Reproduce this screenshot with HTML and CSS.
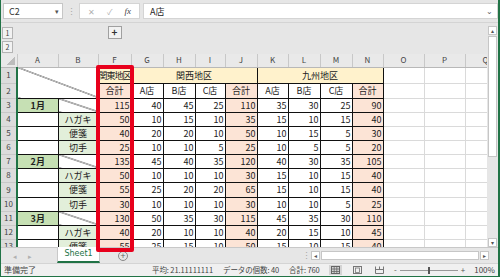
FILE: index.html
```html
<!DOCTYPE html>
<html lang="ja">
<head>
    <meta charset="UTF-8">
    <title>Excel - Sheet1</title>
    <link rel="stylesheet" href="styles.css">
</head>
<body>
<div class="window">
    <div class="formula-bar">
        <div class="namebox"><span>C2</span><span class="caret">▾</span></div>
        <div class="dots">⋮</div>
        <div class="fx-box">
            <span class="fx-btn">✕</span>
            <span class="fx-btn">✓</span>
            <span class="fx-btn fx">fx</span>
        </div>
        <div class="formula"><span>A店</span><span class="chev">⌄</span></div>
    </div>

    <div class="main">
        <div class="work">
            <div class="outline">
                <div class="levels">
                    <span class="lvl">1</span>
                    <span class="lvl">2</span>
                </div>
                <div class="outline-gap"></div>
                <div class="outline-f"><span class="expand">+</span></div>
            </div>
            <div class="sheet">
                <table class="grid">
                    <colgroup>
                        <col class="w-hd"><col class="w-a"><col class="w-b"><col class="w-f"><col class="w-g">
                        <col class="w-h"><col class="w-i"><col class="w-j"><col class="w-k"><col class="w-l">
                        <col class="w-m"><col class="w-n"><col class="w-o"><col class="w-p"><col class="w-q">
                    </colgroup>
                    <thead>
                        <tr>
                            <th class="corner"></th>
                            <th>A</th><th>B</th><th>F</th><th>G</th><th>H</th><th>I</th><th>J</th>
                            <th>K</th><th>L</th><th>M</th><th>N</th><th>O</th><th>P</th><th>Q</th>
                        </tr>
                    </thead>
                    <tbody>
                        <tr class="h16">
                            <th>1</th>
                            <td class="b diag" colspan="2" rowspan="2"></td>
                            <td class="b yel tight">関東地区</td>
                            <td class="b yel ctr" colspan="4">関西地区</td>
                            <td class="b yel ctr" colspan="4">九州地区</td>
                            <td></td><td></td><td></td>
                        </tr>
                        <tr class="h15">
                            <th>2</th>
                            <td class="b pch ctr">合計</td>
                            <td class="b ctr">A店</td><td class="b ctr">B店</td><td class="b ctr">C店</td><td class="b pch ctr">合計</td>
                            <td class="b ctr">A店</td><td class="b ctr">B店</td><td class="b ctr">C店</td><td class="b pch ctr">合計</td>
                            <td></td><td></td><td></td>
                        </tr>
                        <tr class="h14">
                            <th>3</th>
                            <td class="b grn ctr month">1月</td><td class="b diag"></td>
                            <td class="b pch num">115</td>
                            <td class="b num">40</td><td class="b num">45</td><td class="b num">25</td><td class="b pch num">110</td>
                            <td class="b num">35</td><td class="b num">30</td><td class="b num">25</td><td class="b pch num">90</td>
                            <td></td><td></td><td></td>
                        </tr>
                        <tr class="h14">
                            <th>4</th>
                            <td class="b"></td><td class="b lgr ctr">ハガキ</td>
                            <td class="b pch num">50</td>
                            <td class="b num">10</td><td class="b num">15</td><td class="b num">10</td><td class="b pch num">35</td>
                            <td class="b num">15</td><td class="b num">10</td><td class="b num">15</td><td class="b pch num">40</td>
                            <td></td><td></td><td></td>
                        </tr>
                        <tr class="h14">
                            <th>5</th>
                            <td class="b"></td><td class="b lgr ctr">便箋</td>
                            <td class="b pch num">40</td>
                            <td class="b num">20</td><td class="b num">20</td><td class="b num">10</td><td class="b pch num">50</td>
                            <td class="b num">10</td><td class="b num">15</td><td class="b num">5</td><td class="b pch num">30</td>
                            <td></td><td></td><td></td>
                        </tr>
                        <tr class="h14">
                            <th>6</th>
                            <td class="b"></td><td class="b lgr ctr">切手</td>
                            <td class="b pch num">25</td>
                            <td class="b num">10</td><td class="b num">10</td><td class="b num">5</td><td class="b pch num">25</td>
                            <td class="b num">10</td><td class="b num">5</td><td class="b num">5</td><td class="b pch num">20</td>
                            <td></td><td></td><td></td>
                        </tr>
                        <tr class="h14">
                            <th>7</th>
                            <td class="b grn ctr month">2月</td><td class="b diag"></td>
                            <td class="b pch num">135</td>
                            <td class="b num">45</td><td class="b num">40</td><td class="b num">35</td><td class="b pch num">120</td>
                            <td class="b num">40</td><td class="b num">30</td><td class="b num">35</td><td class="b pch num">105</td>
                            <td></td><td></td><td></td>
                        </tr>
                        <tr class="h14">
                            <th>8</th>
                            <td class="b"></td><td class="b lgr ctr">ハガキ</td>
                            <td class="b pch num">50</td>
                            <td class="b num">10</td><td class="b num">10</td><td class="b num">10</td><td class="b pch num">30</td>
                            <td class="b num">15</td><td class="b num">10</td><td class="b num">15</td><td class="b pch num">40</td>
                            <td></td><td></td><td></td>
                        </tr>
                        <tr class="h15">
                            <th>9</th>
                            <td class="b"></td><td class="b lgr ctr">便箋</td>
                            <td class="b pch num">55</td>
                            <td class="b num">25</td><td class="b num">20</td><td class="b num">20</td><td class="b pch num">65</td>
                            <td class="b num">15</td><td class="b num">10</td><td class="b num">15</td><td class="b pch num">40</td>
                            <td></td><td></td><td></td>
                        </tr>
                        <tr class="h14">
                            <th>10</th>
                            <td class="b"></td><td class="b lgr ctr">切手</td>
                            <td class="b pch num">30</td>
                            <td class="b num">10</td><td class="b num">10</td><td class="b num">10</td><td class="b pch num">30</td>
                            <td class="b num">10</td><td class="b num">10</td><td class="b num">5</td><td class="b pch num">25</td>
                            <td></td><td></td><td></td>
                        </tr>
                        <tr class="h14">
                            <th>11</th>
                            <td class="b grn ctr month">3月</td><td class="b diag"></td>
                            <td class="b pch num">130</td>
                            <td class="b num">50</td><td class="b num">35</td><td class="b num">30</td><td class="b pch num">115</td>
                            <td class="b num">45</td><td class="b num">35</td><td class="b num">30</td><td class="b pch num">110</td>
                            <td></td><td></td><td></td>
                        </tr>
                        <tr class="h14">
                            <th>12</th>
                            <td class="b"></td><td class="b lgr ctr">ハガキ</td>
                            <td class="b pch num">40</td>
                            <td class="b num">20</td><td class="b num">10</td><td class="b num">10</td><td class="b pch num">40</td>
                            <td class="b num">20</td><td class="b num">15</td><td class="b num">10</td><td class="b pch num">45</td>
                            <td></td><td></td><td></td>
                        </tr>
                        <tr class="h14">
                            <th>13</th>
                            <td class="b"></td><td class="b lgr ctr">便箋</td>
                            <td class="b pch num">55</td>
                            <td class="b num">25</td><td class="b num">15</td><td class="b num">10</td><td class="b pch num">50</td>
                            <td class="b num">15</td><td class="b num">10</td><td class="b num">15</td><td class="b pch num">40</td>
                            <td></td><td></td><td></td>
                        </tr>
                    </tbody>
                </table>
            </div>
        </div>
        <div class="vscroll">
            <span class="arrow">▴</span>
            <div class="vtrack"><div class="vthumb"></div></div>
            <span class="arrow">▾</span>
        </div>
    </div>

    <div class="tabbar">
        <div class="tab-nav"><span>◂</span><span>▸</span></div>
        <div class="tab">Sheet1</div>
        <div class="add-sheet">+</div>
        <div class="tab-space"></div>
        <div class="dots">⋮</div>
        <div class="hscroll">
            <span class="arrow">◂</span>
            <div class="htrack"></div>
            <span class="arrow">▸</span>
        </div>
    </div>

    <div class="statusbar">
        <span class="ready">準備完了</span>
        <div class="stats">
            <span>平均: 21.11111111</span>
            <span>データの個数: 40</span>
            <span>合計: 760</span>
        </div>
        <div class="views">
            <span class="view on">
                <svg width="9" height="8" viewBox="0 0 9 8"><rect x="0.5" y="0.5" width="8" height="7" fill="none" stroke="#666"/><path d="M0.5 3H8.5M0.5 5.5H8.5M3.2 0.5V7.5M5.8 0.5V7.5" stroke="#666" stroke-width="0.8"/></svg>
            </span>
            <span class="view">
                <svg width="9" height="8" viewBox="0 0 9 8"><rect x="0.5" y="0.5" width="8" height="7" fill="none" stroke="#777"/><rect x="2.5" y="2" width="4" height="4.5" fill="none" stroke="#777" stroke-width="0.8"/></svg>
            </span>
            <span class="view">
                <svg width="9" height="8" viewBox="0 0 9 8"><path d="M0.5 0.5V7.5H8.5V0.5M0.5 3.5H8.5M4.5 0.5V3.5" fill="none" stroke="#777"/></svg>
            </span>
        </div>
        <div class="zoom">
            <span>-</span>
            <div class="slider"><span class="knob"></span></div>
            <span>+</span>
        </div>
        <span class="pct">100%</span>
    </div>

    <div class="marker"></div>
</div>
</body>
</html>
```

FILE: styles.css
```css
* {
    margin: 0;
    padding: 0;
    box-sizing: border-box;
}
body {
    width: 500px;
    height: 277px;
    overflow: hidden;
    font-family: "Noto Sans CJK JP", "Noto Sans", sans-serif;
    font-size: 9px;
    color: #222;
    background: #fff;
}
.window {
    position: relative;
    width: 500px;
    height: 277px;
    display: flex;
    flex-direction: column;
    background: #e6e6e6;
    border-left: 1px solid #217346;
    border-right: 2px solid #217346;
    border-bottom: 1px solid #217346;
}

/* formula bar */
.formula-bar {
    height: 23px;
    display: flex;
    align-items: center;
    padding-left: 2px;
    border-bottom: 1px solid #d4d4d4;
}
.namebox {
    width: 60px;
    height: 16px;
    background: #fff;
    border: 1px solid #c6c6c6;
    display: flex;
    align-items: center;
    justify-content: space-between;
    padding: 0 3px 0 5px;
    color: #333;
    line-height: 1;
}
.caret {
    font-size: 7px;
    color: #555;
}
.dots {
    width: 16px;
    text-align: center;
    color: #a6a6a6;
    font-size: 9px;
}
.fx-box {
    width: 61px;
    height: 16px;
    background: #fff;
    border: 1px solid #d4d4d4;
    display: flex;
    align-items: center;
    justify-content: space-around;
    padding: 0 2px;
}
.fx-btn {
    color: #b0b0b0;
    font-size: 8px;
}
.fx {
    color: #444;
    font-style: italic;
    font-family: "Liberation Serif", serif;
    font-size: 9px;
}
.formula {
    flex: 1;
    height: 16px;
    margin-left: 3px;
    background: #fff;
    border: 1px solid #d4d4d4;
    display: flex;
    align-items: center;
    justify-content: space-between;
    padding: 0 4px 0 6px;
    line-height: 1;
}
.chev {
    color: #666;
    font-size: 8px;
}

/* sheet area */
.main {
    flex: 1;
    display: flex;
    min-height: 0;
}
.work {
    width: 486px;
    display: flex;
    flex-direction: column;
    overflow: hidden;
}
.outline {
    height: 31px;
    display: flex;
}
.levels {
    width: 16px;
    display: flex;
    flex-direction: column;
    gap: 2px;
    padding: 4px 0 0 1px;
}
.lvl {
    width: 11px;
    height: 12px;
    background: #f2f2f2;
    border: 1px solid #b4b4b4;
    font-size: 7px;
    line-height: 10px;
    text-align: center;
    color: #444;
}
.outline-gap {
    width: 81px;
}
.outline-f {
    width: 33px;
    display: flex;
    justify-content: center;
    padding-top: 3px;
}
.expand {
    width: 14px;
    height: 13px;
    background: #f2f2f2;
    border: 1px solid #a0a0a0;
    text-align: center;
    line-height: 10px;
    font-weight: bold;
    font-size: 10px;
    color: #333;
}
.sheet {
    flex: 1;
    overflow: hidden;
    background: #fff;
}
.grid {
    width: 505px;
    table-layout: fixed;
    border-collapse: collapse;
    line-height: 1;
}
.w-hd { width: 16px; }
.w-a { width: 41px; }
.w-b { width: 40px; }
.w-f { width: 33px; }
.w-g, .w-h, .w-j, .w-l, .w-m { width: 32px; }
.w-i { width: 30px; }
.w-k, .w-n { width: 31px; }
.w-o, .w-p, .w-q { width: 41px; }

thead th {
    height: 13px;
    background: #e9e9e9;
    border-right: 1px solid #c8c8c8;
    border-bottom: 1px solid #b8b8b8;
    font-weight: normal;
    font-size: 8px;
    color: #444;
    text-align: center;
}
thead th.corner {
    background: linear-gradient(135deg, #e9e9e9 55%, #bcbcbc 55%);
    background-size: 9px 9px;
    background-repeat: no-repeat;
    background-position: right 2px bottom 2px;
    background-color: #e9e9e9;
}
tbody th {
    background: #dcdcdc;
    border-right: 2px solid #217346;
    border-bottom: 1px solid #c8c8c8;
    font-weight: normal;
    font-size: 8px;
    color: #444;
    text-align: center;
}
tbody td {
    border: 1px solid #dadada;
    padding: 0 1px;
    white-space: nowrap;
    overflow: hidden;
}
.h16 { height: 16px; }
.h15 { height: 15px; }
.h14 { height: 14px; }

td.b { border: 1px solid #111; }
.yel { background: #fff2cc; }
.pch { background: #fce4d6; }
.grn { background: #c6e0b4; }
.lgr { background: #e2efda; }
.ctr { text-align: center; }
.num { text-align: right; }
.tight {
    padding: 0;
    letter-spacing: -1px;
}
.month { font-weight: bold; }
.diag {
    background: linear-gradient(to top right, transparent calc(50% - 0.7px), #333 50%, transparent calc(50% + 0.7px));
}

/* vertical scrollbar */
.vscroll {
    width: 11px;
    display: flex;
    flex-direction: column;
    align-items: center;
    padding: 3px 0 0;
}
.vscroll .arrow {
    width: 9px;
    height: 9px;
    background: #fff;
    border: 1px solid #c6c6c6;
    font-size: 6px;
    line-height: 7px;
    text-align: center;
    color: #555;
}
.vtrack {
    flex: 1;
    width: 9px;
    padding: 1px 0;
}
.vthumb {
    width: 9px;
    height: 121px;
    background: #fff;
    border: 1px solid #c6c6c6;
}

/* sheet tabs */
.tabbar {
    height: 16px;
    display: flex;
    align-items: stretch;
    border-top: 1px solid #c8c8c8;
}
.tab-nav {
    width: 56px;
    display: flex;
    gap: 11px;
    padding-left: 12px;
    align-items: center;
    color: #b0b0b0;
    font-size: 7px;
}
.tab {
    width: 43px;
    background: #fff;
    border-left: 1px solid #c8c8c8;
    border-right: 1px solid #c8c8c8;
    border-bottom: 2px solid #217346;
    color: #217346;
    font-family: "DejaVu Sans", sans-serif;
    font-size: 8px;
    text-align: center;
    line-height: 13px;
    margin-top: -1px;
}
.add-sheet {
    width: 10px;
    height: 10px;
    margin: 3px 0 0 18px;
    border: 1px solid #888;
    border-radius: 50%;
    font-size: 9px;
    line-height: 8px;
    text-align: center;
    color: #666;
}
.tab-space {
    flex: 1;
}
.tabbar .dots {
    width: 10px;
    line-height: 15px;
}
.hscroll {
    width: 187px;
    display: flex;
    align-items: center;
    padding-right: 9px;
}
.hscroll .arrow {
    width: 9px;
    height: 9px;
    background: #fff;
    border: 1px solid #c6c6c6;
    font-size: 6px;
    line-height: 7px;
    text-align: center;
    color: #555;
}
.htrack {
    flex: 1;
    height: 9px;
    margin: 0 1px;
    background: #fff;
    border: 1px solid #c6c6c6;
}

/* status bar */
.statusbar {
    height: 13px;
    display: flex;
    align-items: center;
    background: #f0f0f0;
    border-top: 1px solid #d4d4d4;
    color: #444;
    font-size: 8px;
    line-height: 1;
    white-space: nowrap;
}
.ready {
    width: 151px;
    padding-left: 3px;
}
.stats {
    width: 177px;
    display: flex;
    gap: 10px;
    font-size: 7.5px;
    letter-spacing: -0.1px;
}
.views {
    display: flex;
    align-items: center;
    gap: 9px;
}
.view {
    display: flex;
    padding: 1px 2px;
}
.view.on {
    background: #d4d4d4;
}
.zoom {
    display: flex;
    align-items: center;
    gap: 3px;
    margin-left: 8px;
    color: #555;
}
.slider {
    position: relative;
    width: 58px;
    height: 1px;
    background: #999;
}
.knob {
    position: absolute;
    left: 28px;
    top: -3px;
    width: 2px;
    height: 7px;
    background: #555;
}
.pct {
    margin-left: 9px;
}

/* red annotation frame */
.marker {
    position: absolute;
    left: 95px;
    top: 65px;
    width: 38px;
    height: 187px;
    border: 4px solid #e8001c;
    border-radius: 2px;
}
```
